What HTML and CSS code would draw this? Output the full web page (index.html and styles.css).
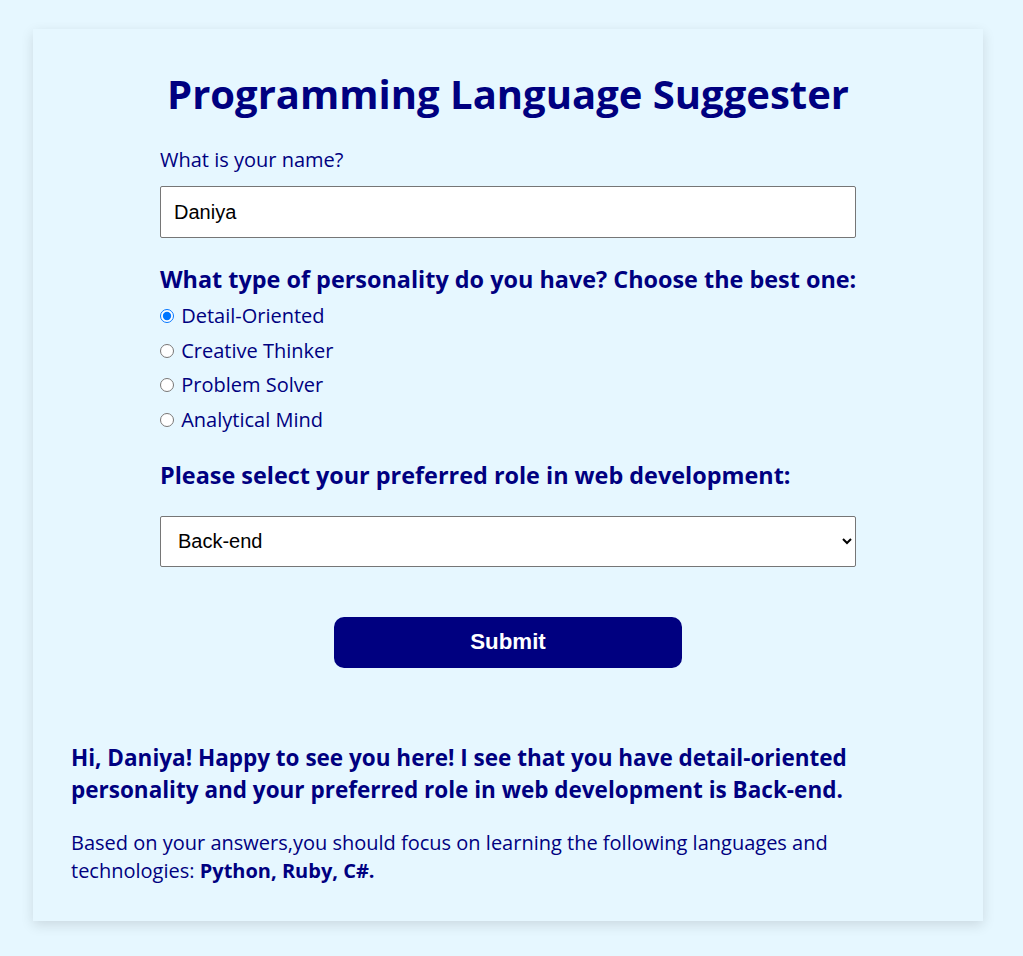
FILE: index.html
```html
<!DOCTYPE html>
<html lang="en">
<head>
<meta charset="utf-8">
<title>Programming Language Suggester</title>
<link rel="stylesheet" href="styles.css">
</head>
<body>
<main class="card">
  <h1 class="title">Programming Language Suggester</h1>
  <form class="form">
    <label class="name-label" for="name">What is your name?</label>
    <input class="text-input" id="name" type="text" value="Daniya">
    <h3 class="question q-personality">What type of personality do you have? Choose the best one:</h3>
    <div class="options">
      <label class="option"><input type="radio" name="p" checked> Detail-Oriented</label>
      <label class="option"><input type="radio" name="p"> Creative Thinker</label>
      <label class="option"><input type="radio" name="p"> Problem Solver</label>
      <label class="option"><input type="radio" name="p"> Analytical Mind</label>
    </div>
    <h3 class="question q-role">Please select your preferred role in web development:</h3>
    <select class="select">
      <option>Front-end</option>
      <option selected>Back-end</option>
      <option>Full-stack</option>
    </select>
    <div class="actions">
      <button type="button" class="submit">Submit</button>
    </div>
  </form>
  <section class="result">
    <h3 class="result-title">Hi, Daniya! Happy to see you here! I see that you have detail-oriented personality and your preferred role in web development is Back-end.</h3>
    <p class="result-text">Based on your answers,you should focus on learning the following languages and technologies: <strong>Python, Ruby, C#.</strong></p>
  </section>
</main>
</body>
</html>
```

FILE: styles.css
```css
html, body {
  margin: 0;
  padding: 0;
  background: #e6f7ff;
}
body {
  font-family: "Open Sans", "Noto Sans", sans-serif;
  color: #000080;
  padding: 29px 0 35px 33px;
}
.card {
  box-sizing: border-box;
  width: 950px;
  background: #e6f7ff;
  padding: 38px 38px 36px;
  box-shadow: 0 4px 12px rgba(0, 0, 0, 0.12);
}
.title {
  margin: 0;
  text-align: center;
  font-size: 40px;
  font-weight: 700;
  line-height: 54.5px;
  color: #000080;
}
.form {
  width: 696px;
  margin: 25px auto 0;
  display: flex;
  flex-direction: column;
}
.name-label {
  font-size: 20px;
  line-height: 26px;
}
.text-input {
  box-sizing: border-box;
  height: 52px;
  margin-top: 13.5px;
  padding: 0 13px;
  border: 1px solid #767676;
  border-radius: 2px;
  background: #fff;
  font-family: "Liberation Sans", Arial, sans-serif;
  font-size: 20px;
  color: #000;
}
.question {
  margin: 0;
  font-size: 23.4px;
  font-weight: 700;
  line-height: 30px;
  white-space: nowrap;
}
.q-personality { margin-top: 26px; }
.options {
  margin-top: 8px;
  display: flex;
  flex-direction: column;
  gap: 7.5px;
}
.option {
  font-size: 20px;
  line-height: 27px;
}
.option input {
  margin: 0 2px 0 0;
  width: 14px;
  height: 14px;
  vertical-align: 0;
}
.q-role { margin-top: 27px; }
.select {
  box-sizing: border-box;
  height: 51px;
  margin-top: 26.2px;
  padding: 0 14px 0 13px;
  border: 1px solid #767676;
  border-radius: 2px;
  background: #fff;
  font-family: "Liberation Sans", Arial, sans-serif;
  font-size: 20px;
  color: #000;
}
.actions {
  margin-top: 50px;
  display: flex;
  justify-content: center;
}
.submit {
  width: 348px;
  height: 51px;
  border: none;
  border-radius: 10px;
  background: #000080;
  color: #fff;
  font-family: "Liberation Sans", Arial, sans-serif;
  font-size: 22.3px;
  font-weight: 700;
}
.result {
  margin-top: 74.6px;
}
.result-title {
  margin: 0;
  font-size: 22.5px;
  font-weight: 700;
  line-height: 31.3px;
}
.result-text {
  margin: 24px 0 0;
  font-size: 20px;
  line-height: 28px;
}
```
